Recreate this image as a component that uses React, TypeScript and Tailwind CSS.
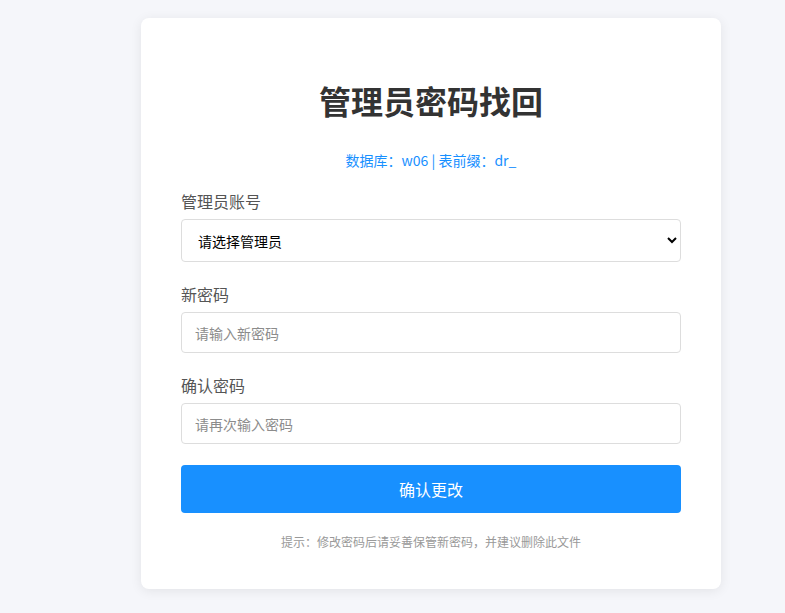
import React from "react";

export default function App() {
  return (
    <div
      className="min-h-[613px] bg-[#f5f6fa] pt-[18px] pl-[141px]"
      style={{ fontFamily: '"Noto Sans CJK SC", "Noto Sans", sans-serif' }}
    >
      <div className="w-[580px] bg-white rounded-[8px] shadow-[0_2px_12px_rgba(0,0,0,0.08)] px-[40px] pt-[40px] pb-[38px]">
        <h1 className="mt-[18px] text-center text-[32px] leading-[48px] font-bold text-[#333]">
          管理员密码找回
        </h1>
        <p className="mt-[26px] text-center text-[14px] leading-[21px] text-[#1890ff]">
          数据库：w06 | 表前缀：dr_
        </p>

        <div className="mt-[18px]">
          <label className="block text-[16px] leading-[24px] text-[#555] mb-[6px]">管理员账号</label>
          <select className="block w-full h-[43px] border border-[#ddd] rounded-[4px] px-[12px] text-[14px] text-black bg-white">
            <option>请选择管理员</option>
          </select>
        </div>

        <div className="mt-[20px]">
          <label className="block text-[16px] leading-[24px] text-[#555] mb-[6px]">新密码</label>
          <input
            type="password"
            placeholder="请输入新密码"
            className="block w-full h-[41px] border border-[#ddd] rounded-[4px] px-[13px] text-[14px] placeholder:text-[#8c8c8c] outline-none"
          />
        </div>

        <div className="mt-[20px]">
          <label className="block text-[16px] leading-[24px] text-[#555] mb-[6px]">确认密码</label>
          <input
            type="password"
            placeholder="请再次输入密码"
            className="block w-full h-[41px] border border-[#ddd] rounded-[4px] px-[13px] text-[14px] placeholder:text-[#8c8c8c] outline-none"
          />
        </div>

        <button className="mt-[21px] block w-full h-[48px] rounded-[4px] bg-[#1890ff] text-white text-[16px]">
          确认更改
        </button>

        <p className="mt-[20px] text-center text-[12px] leading-[18px] text-[#999]">
          提示：修改密码后请妥善保管新密码，并建议删除此文件
        </p>
      </div>
    </div>
  );
}
